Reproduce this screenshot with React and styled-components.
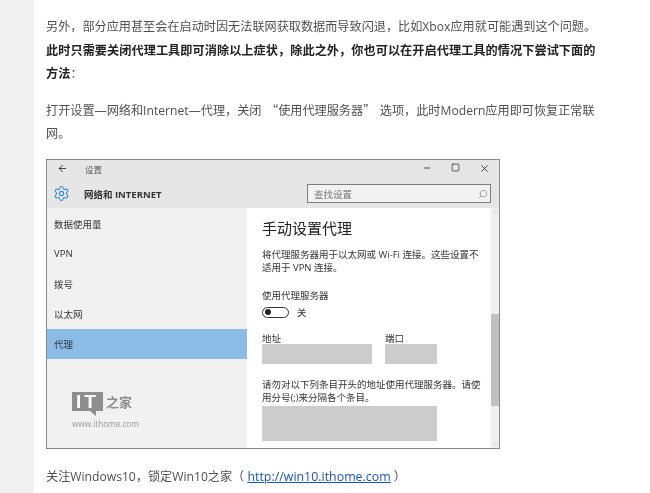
import React from 'react';
import styled, { createGlobalStyle } from 'styled-components';
import { ArrowLeft, ChevronDown, ChevronUp, Minus, Search, Settings, Square, X } from 'lucide-react';

const GlobalStyle = createGlobalStyle`
  html, body {
    margin: 0;
    padding: 0;
    background: #fff;
    overflow: hidden;
  }
`;

const Page = styled.div`
  display: flex;
  height: 493px;
  font-family: "Open Sans", "Noto Sans CJK SC", sans-serif;
`;

const Gutter = styled.div`
  width: 34px;
  flex: none;
  background: #f1f1f1;
`;

const Article = styled.div`
  width: 564px;
  padding: 15px 0 0 12px;
  color: #505050;
  font-size: 12.15px;
  filter: blur(0.35px);
`;

const Paragraph = styled.p`
  margin: 0 0 ${(p) => p.$gap ?? 12}px;
  line-height: 23.5px;
  white-space: nowrap;
`;

const Strong = styled.strong`
  color: #222;
  font-weight: 700;
  letter-spacing: 0.07px;
`;

const Quote = styled.span`
  font-family: "Noto Sans CJK SC", sans-serif;
  padding: ${(p) => (p.$open ? '0 0 0 4.5px' : '0 4.5px 0 0')};
`;

const Link = styled.a`
  color: #1a55b8;
  text-decoration: underline;
  font-size: 12.4px;
`;

const Window = styled.div`
  width: 454px;
  height: 290px;
  box-sizing: border-box;
  margin-bottom: 16px;
  border: 1px solid #8a8a8a;
  display: flex;
  flex-direction: column;
  filter: blur(0.35px);
  color: #333;
  font-size: 9.5px;
`;

const Header = styled.div`
  height: 48px;
  flex: none;
  background: #e6e6e6;
  display: flex;
  flex-direction: column;
`;

const TitleBar = styled.div`
  height: 18px;
  display: flex;
  align-items: center;
  padding: 0 9px 0 10px;
`;

const WindowTitle = styled.span`
  margin-left: 17px;
  font-size: 8.5px;
  color: #555;
`;

const Controls = styled.div`
  margin-left: auto;
  display: flex;
  gap: 19px;
  color: #333;
`;

const HeaderRow = styled.div`
  flex: 1;
  display: flex;
  align-items: center;
  padding: 2px 8px 0 6px;
`;

const PageName = styled.span`
  margin-left: 14px;
  font-weight: 700;
  font-size: 9.5px;
  color: #333;
`;

const SearchBox = styled.div`
  margin-left: auto;
  width: 184px;
  height: 19px;
  box-sizing: border-box;
  border: 1px solid #7d7d7d;
  background: #f2f2f2;
  display: flex;
  align-items: center;
  justify-content: space-between;
  padding: 0 2px 0 6px;
  color: #777;
`;

const FlippedSearch = styled(Search)`
  transform: scaleX(-1);
  color: #999;
`;

const Body = styled.div`
  flex: 1;
  min-height: 0;
  display: flex;
`;

const Sidebar = styled.div`
  width: 200px;
  flex: none;
  background: #f1f1f1;
  display: flex;
  flex-direction: column;
  padding-top: 1px;
`;

const NavItem = styled.div`
  height: 30px;
  display: flex;
  align-items: center;
  padding-left: 7px;
  background: ${(p) => (p.$active ? '#8bbce8' : 'transparent')};
`;

const Watermark = styled.div`
  margin: 33px 0 0 25px;
  display: flex;
  flex-direction: column;
  gap: 7px;
`;

const LogoRow = styled.div`
  display: flex;
  align-items: center;
  gap: 3px;
`;

const LogoMark = styled.div`
  position: relative;
  width: 31px;
  height: 19px;
  background: #8e8e8e;
  color: #fff;
  font: 700 19px/19px "Liberation Sans", sans-serif;
  letter-spacing: 3px;
  text-align: center;
`;

const LogoTail = styled.span`
  position: absolute;
  left: 18px;
  top: 19px;
  border-top: 5px solid #8e8e8e;
  border-left: 6px solid transparent;
`;

const LogoName = styled.span`
  font-size: 13px;
  font-weight: 700;
  color: #8e8e8e;
`;

const LogoUrl = styled.span`
  font-size: 8.2px;
  color: #999;
`;

const Content = styled.div`
  flex: 1;
  background: #fff;
  padding: 9px 0 0 15px;
  line-height: 13px;
  white-space: nowrap;
`;

const Heading = styled.div`
  font-size: 15px;
  line-height: 22px;
  color: #222;
  margin-bottom: 9px;
`;

const Text = styled.div`
  margin-bottom: ${(p) => p.$gap || 0}px;
`;

const ToggleRow = styled.div`
  display: flex;
  align-items: center;
  gap: 8px;
  margin: 4px 0 14px;
`;

const Toggle = styled.div`
  width: 27px;
  height: 11px;
  box-sizing: border-box;
  border: 1.5px solid #333;
  border-radius: 6px;
  display: flex;
  align-items: center;
  padding-left: 2px;
`;

const Knob = styled.span`
  width: 6px;
  height: 6px;
  border-radius: 50%;
  background: #222;
`;

const Fields = styled.div`
  display: flex;
  gap: 13px;
  margin-bottom: 14px;
`;

const Field = styled.div`
  width: ${(p) => p.$width}px;
  line-height: 11px;
`;

const Input = styled.div`
  width: ${(p) => p.$width}px;
  height: ${(p) => p.$height}px;
  background: #cccccc;
`;

const Scrollbar = styled.div`
  width: 8px;
  flex: none;
  background: #f0f0f0;
  display: flex;
  flex-direction: column;
  align-items: center;
  padding: 1px 0;
  color: #aaa;
`;

const Thumb = styled.div`
  width: 100%;
  height: 92px;
  margin: 98px 0 auto;
  background: #c0c0c0;
`;

const navItems = ['数据使用量', 'VPN', '拨号', '以太网', '代理'];

export default function App() {
  return (
    <Page>
      <GlobalStyle />
      <Gutter />
      <Article>
        <Paragraph $gap={0}>另外，部分应用甚至会在启动时因无法联网获取数据而导致闪退，比如Xbox应用就可能遇到这个问题。</Paragraph>
        <Paragraph>
          <Strong>此时只需要关闭代理工具即可消除以上症状，除此之外，你也可以在开启代理工具的情况下尝试下面的</Strong>
          <br />
          <Strong>方法</Strong>：
        </Paragraph>
        <Paragraph $gap={13}>
          打开设置—网络和Internet—代理，关闭<Quote $open>“</Quote>使用代理服务器<Quote>”</Quote>选项，此时Modern应用即可恢复正常联
          <br />
          网。
        </Paragraph>
        <Window>
          <Header>
            <TitleBar>
              <ArrowLeft size={11} />
              <WindowTitle>设置</WindowTitle>
              <Controls>
                <Minus size={10} />
                <Square size={9} />
                <X size={11} />
              </Controls>
            </TitleBar>
            <HeaderRow>
              <Settings size={17} color="#3a8cc4" strokeWidth={1.5} />
              <PageName>网络和 INTERNET</PageName>
              <SearchBox>
                查找设置
                <FlippedSearch size={10} />
              </SearchBox>
            </HeaderRow>
          </Header>
          <Body>
            <Sidebar>
              {navItems.map((item) => (
                <NavItem key={item} $active={item === '代理'}>{item}</NavItem>
              ))}
              <Watermark>
                <LogoRow>
                  <LogoMark>
                    IT
                    <LogoTail />
                  </LogoMark>
                  <LogoName>之家</LogoName>
                </LogoRow>
                <LogoUrl>www.ithome.com</LogoUrl>
              </Watermark>
            </Sidebar>
            <Content>
              <Heading>手动设置代理</Heading>
              <Text $gap={15}>
                将代理服务器用于以太网或 Wi-Fi 连接。这些设置不
                <br />
                适用于 VPN 连接。
              </Text>
              <Text>使用代理服务器</Text>
              <ToggleRow>
                <Toggle>
                  <Knob />
                </Toggle>
                关
              </ToggleRow>
              <Fields>
                <Field $width={110}>
                  地址
                  <Input $width={110} $height={20} />
                </Field>
                <Field $width={52}>
                  端口
                  <Input $width={52} $height={20} />
                </Field>
              </Fields>
              <Text $gap={2}>
                请勿对以下列条目开头的地址使用代理服务器。请使
                <br />
                用分号(;)来分隔各个条目。
              </Text>
              <Input $width={175} $height={35} />
            </Content>
            <Scrollbar>
              <ChevronUp size={7} />
              <Thumb />
              <ChevronDown size={7} />
            </Scrollbar>
          </Body>
        </Window>
        <Paragraph>
          关注Windows10，锁定Win10之家（ <Link href="#">http://win10.ithome.com</Link> ）
        </Paragraph>
      </Article>
    </Page>
  );
}
